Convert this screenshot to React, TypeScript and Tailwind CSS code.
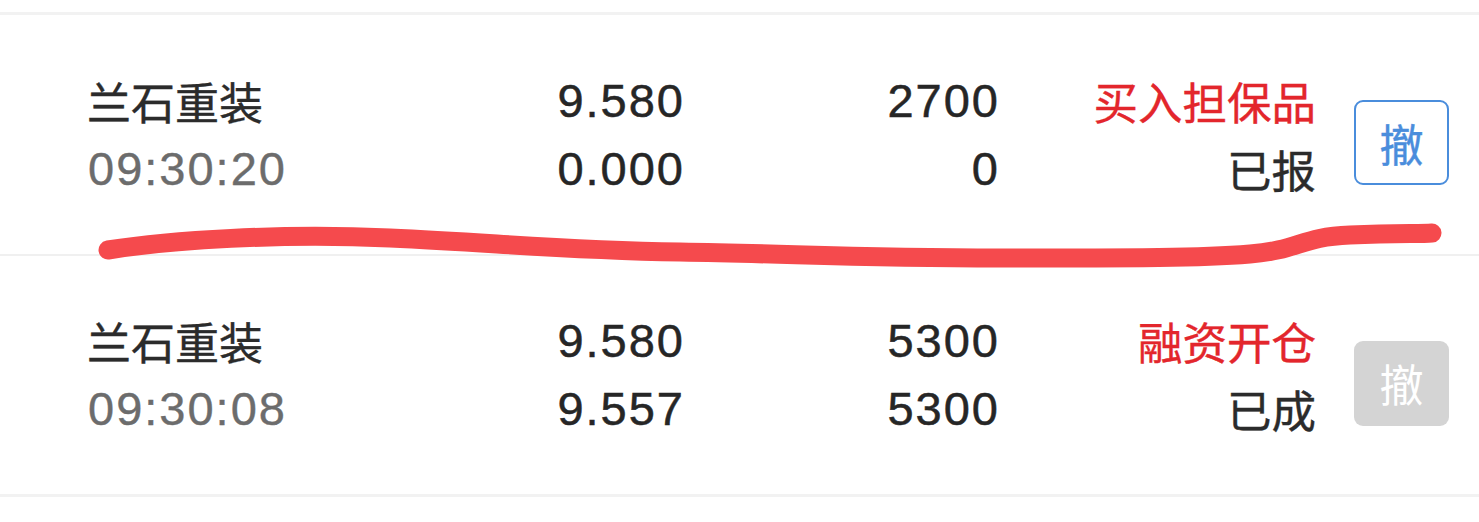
import React from "react";

type Order = {
  name: string;
  time: string;
  price: string;
  dealPrice: string;
  qty: string;
  dealQty: string;
  type: string;
  status: string;
  cancellable: boolean;
};

const orders: Order[] = [
  {
    name: "兰石重装",
    time: "09:30:20",
    price: "9.580",
    dealPrice: "0.000",
    qty: "2700",
    dealQty: "0",
    type: "买入担保品",
    status: "已报",
    cancellable: true,
  },
  {
    name: "兰石重装",
    time: "09:30:08",
    price: "9.580",
    dealPrice: "9.557",
    qty: "5300",
    dealQty: "5300",
    type: "融资开仓",
    status: "已成",
    cancellable: false,
  },
];

const cjk = { fontFamily: '"Noto Sans CJK SC", "Noto Sans", sans-serif' };
const num = { fontFamily: '"Liberation Sans", Arial, sans-serif' };

function Row({ o, last }: { o: Order; last?: boolean }) {
  return (
    <div
      className={`flex items-center pl-[88px] pr-[30px] ${last ? "h-[238px]" : "h-[239px]"}`}
    >
      <div className="w-[395px] flex flex-col leading-[68px]">
        <span
          className="text-[44px] text-[#2b2b2b] ml-[-1px] [-webkit-text-stroke:0.4px_#2b2b2b]"
          style={cjk}
        >
          {o.name}
        </span>
        <span
          className="text-[47px] text-[#6c6c6c] tracking-[2px] [-webkit-text-stroke:0.4px_#6c6c6c]"
          style={num}
        >
          {o.time}
        </span>
      </div>
      <div
        className="w-[200px] flex flex-col items-end leading-[68px] text-[47px] text-[#262626] tracking-[2px] [-webkit-text-stroke:0.5px_#262626]"
        style={num}
      >
        <span className="mr-[-2px]">{o.price}</span>
        <span className="mr-[-2px]">{o.dealPrice}</span>
      </div>
      <div
        className="w-[315px] flex flex-col items-end leading-[68px] text-[47px] text-[#262626] tracking-[2px] [-webkit-text-stroke:0.5px_#262626]"
        style={num}
      >
        <span className="mr-[-2px]">{o.qty}</span>
        <span className="mr-[-2px]">{o.dealQty}</span>
      </div>
      <div
        className="w-[318px] flex flex-col items-end leading-[68px] text-[44.5px]"
        style={cjk}
      >
        <span className="text-[#e3262c] [-webkit-text-stroke:0.4px_#e3262c]">{o.type}</span>
        <span className="text-[#2b2b2b] [-webkit-text-stroke:0.4px_#2b2b2b]">{o.status}</span>
      </div>
      <div className="ml-[38px] mt-[16px]">
        {o.cancellable ? (
          <div
            className="w-[95px] h-[85px] rounded-[9px] border-2 border-[#4a8ddc] flex items-center justify-center text-[44px] text-[#4a8ddc] [-webkit-text-stroke:0.4px_#4a8ddc]"
            style={cjk}
          >
            撤
          </div>
        ) : (
          <div
            className="w-[95px] h-[85px] rounded-[9px] bg-[#d4d4d4] flex items-center justify-center text-[44px] text-white"
            style={cjk}
          >
            撤
          </div>
        )}
      </div>
    </div>
  );
}

export default function App() {
  return (
    <div className="relative w-[1479px] h-[522px] bg-white overflow-hidden">
      <div className="h-[12px]" />
      <div className="h-[3px] bg-[#f2f2f2]" />
      <Row o={orders[0]} />
      <div className="h-[2px] bg-[#f0f0f0]" />
      <Row o={orders[1]} last />
      <div className="h-[3px] bg-[#f2f2f2]" />
      <svg
        className="absolute left-0 top-0 pointer-events-none"
        width="1479"
        height="522"
        viewBox="0 0 1479 522"
      >
        <path
          d="M108 250 C 170 240, 280 233, 390 238 S 560 250, 680 252 S 860 258, 1000 258 S 1200 258, 1250 254 S 1300 237, 1350 235 S 1420 234, 1432 233"
          fill="none"
          stroke="#f54a4d"
          strokeWidth="19"
          strokeLinecap="round"
          strokeLinejoin="round"
        />
      </svg>
    </div>
  );
}
